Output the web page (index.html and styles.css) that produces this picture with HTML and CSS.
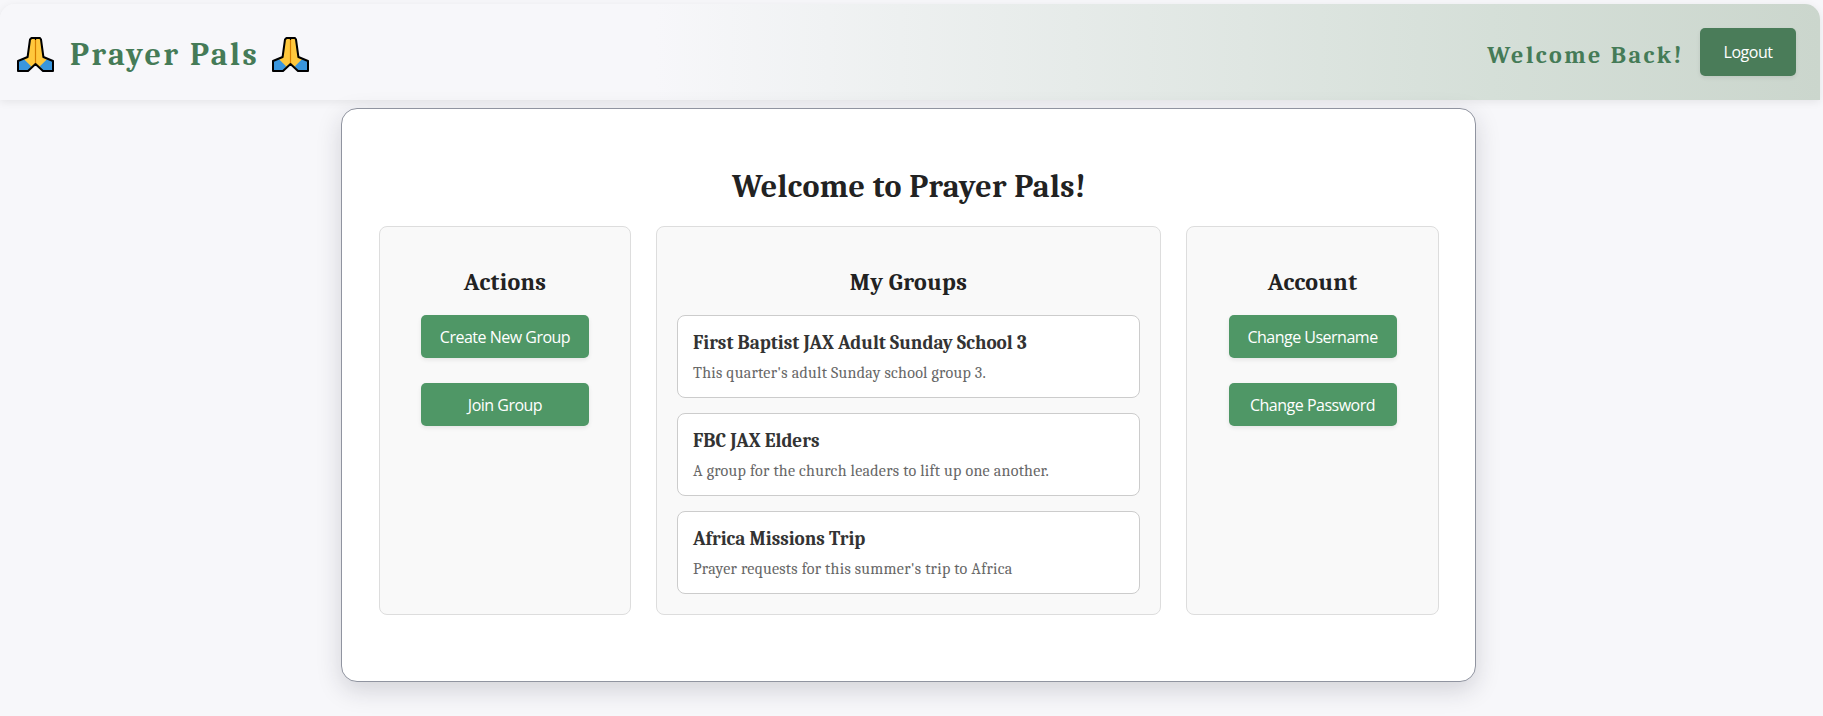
FILE: index.html
```
<!DOCTYPE html>
<html lang="en">
<head>
<meta charset="utf-8">
<title>Prayer Pals</title>
<link rel="stylesheet" href="styles.css">
</head>
<body>
<svg class="defs" width="0" height="0" aria-hidden="true">
  <symbol id="pray" viewBox="0 0 37 35">
    <path d="M14.500 1H23l1 1.500L26.400 20 36 24v10H26L18.500 27 11 34H1V24l9.600-4L13 2.500z" fill="#ffc83d"/>
    <path d="M1 24l5.500-2.300 7.600 7.500L11 34H1zM36 24l-5.500-2.300-7.600 7.500L26 34h10z" fill="#3a96dd"/>
    <path d="M18.500 2v25" stroke="#d67d00" stroke-width="1.200" fill="none"/>
    <path d="M14.500 1H23l1 1.500L26.400 20 36 24v10H26L18.500 27 11 34H1V24l9.600-4L13 2.500z" fill="none" stroke="#000" stroke-width="2" stroke-linejoin="round"/>
    <path d="M18.500 1v2" stroke="#000" stroke-width="1.200" fill="none"/>
  </symbol>
</svg>
<header class="header">
  <h1 class="brand"><svg class="emoji"><use href="#pray"/></svg><span>Prayer Pals</span><svg class="emoji"><use href="#pray"/></svg></h1>
  <div class="user">
    <h2 class="greeting">Welcome Back!</h2>
    <button class="btn btn-logout">Logout</button>
  </div>
</header>
<main class="card">
  <h1 class="card-title">Welcome to Prayer Pals!</h1>
  <div class="columns">
    <section class="panel">
      <h2 class="panel-title">Actions</h2>
      <div class="actions">
        <button class="btn">Create New Group</button>
        <button class="btn">Join Group</button>
      </div>
    </section>
    <section class="panel">
      <h2 class="panel-title">My Groups</h2>
      <div class="groups">
        <article class="group"><h3 class="group-name">First Baptist JAX Adult Sunday School 3</h3><p class="group-text">This quarter's adult Sunday school group 3.</p></article>
        <article class="group"><h3 class="group-name">FBC JAX Elders</h3><p class="group-text">A group for the church leaders to lift up one another.</p></article>
        <article class="group"><h3 class="group-name">Africa Missions Trip</h3><p class="group-text">Prayer requests for this summer's trip to Africa</p></article>
      </div>
    </section>
    <section class="panel">
      <h2 class="panel-title">Account</h2>
      <div class="actions">
        <button class="btn">Change Username</button>
        <button class="btn">Change Password</button>
      </div>
    </section>
  </div>
</main>
</body>
</html>
```
FILE: styles.css
```
* { box-sizing: border-box; }
body {
  margin: 0;
  min-height: 716px;
  padding-top: 4px;
  background: #f7f7fa;
  color: #222;
  font-family: Cambria, Caladea, "Liberation Serif", serif;
  overflow: hidden;
}
h1, h2, h3, p { margin: 0; }
.defs { display: none; }
.header {
  display: flex;
  justify-content: space-between;
  align-items: center;
  width: 1820px;
  height: 96px;
  padding: 0 24px 0 17px;
  border-radius: 15px 15px 0 0;
  background: linear-gradient(to right, #f7f7fa 36%, #d5dfd8 82%, #cbd6cd);
  box-shadow: 0 2px 8px rgba(0, 0, 0, 0.08);
}
.brand {
  display: flex;
  align-items: center;
  color: #457b57;
  font-size: 32px;
  line-height: 38px;
  letter-spacing: 2.5px;
}
.brand span { margin: 0 13px 0 16px; padding-top: 6px; }
.emoji { width: 37px; height: 35px; margin-top: 5px; }
.user { display: flex; align-items: center; gap: 16px; }
.greeting {
  padding-top: 5px;
  color: #457b57;
  font-size: 24px;
  line-height: 30px;
  letter-spacing: 2.5px;
}
.btn {
  width: 168px;
  height: 43px;
  padding: 0;
  border: 0;
  border-radius: 5px;
  background: #4f9766;
  box-shadow: 0 2px 4px rgba(0, 0, 0, 0.08);
  color: #fff;
  font: 16px "Open Sans", "Noto Sans", sans-serif;
  letter-spacing: -0.5px;
}
.btn-logout { width: 96px; height: 48px; background: #4a7c59; }
.card {
  width: 1135px;
  height: 574px;
  margin: 8px 0 0 341px;
  padding: 58px 36px 0 37px;
  border: 1px solid #9094a0;
  border-radius: 16px;
  background: #fff;
  box-shadow: 0 8px 24px rgba(30, 30, 50, 0.17);
}
.card-title {
  font-size: 32px;
  line-height: 40px;
  letter-spacing: 0.37px;
  text-align: center;
}
.columns {
  display: grid;
  grid-template-columns: 252px 505px 253px;
  gap: 25px;
  height: 389px;
  margin-top: 19px;
}
.panel {
  padding: 40px 20px 20px;
  border: 1px solid #ddd;
  border-radius: 8px;
  background: #f9f9f9;
}
.panel-title {
  margin-bottom: 18px;
  font-size: 24px;
  line-height: 30px;
  letter-spacing: 0.33px;
  text-align: center;
}
.actions { display: flex; flex-direction: column; align-items: center; gap: 25px; }
.groups { display: grid; gap: 15px; }
.group {
  height: 83px;
  padding: 16px 15px 13px;
  border: 1px solid #ccc;
  border-radius: 8px;
  background: #fff;
}
.group-name { color: #333; font-size: 19.2px; line-height: 23px; }
.group-text { margin-top: 9px; color: #666; font-size: 16px; line-height: 19px; letter-spacing: 0.27px; }
```
